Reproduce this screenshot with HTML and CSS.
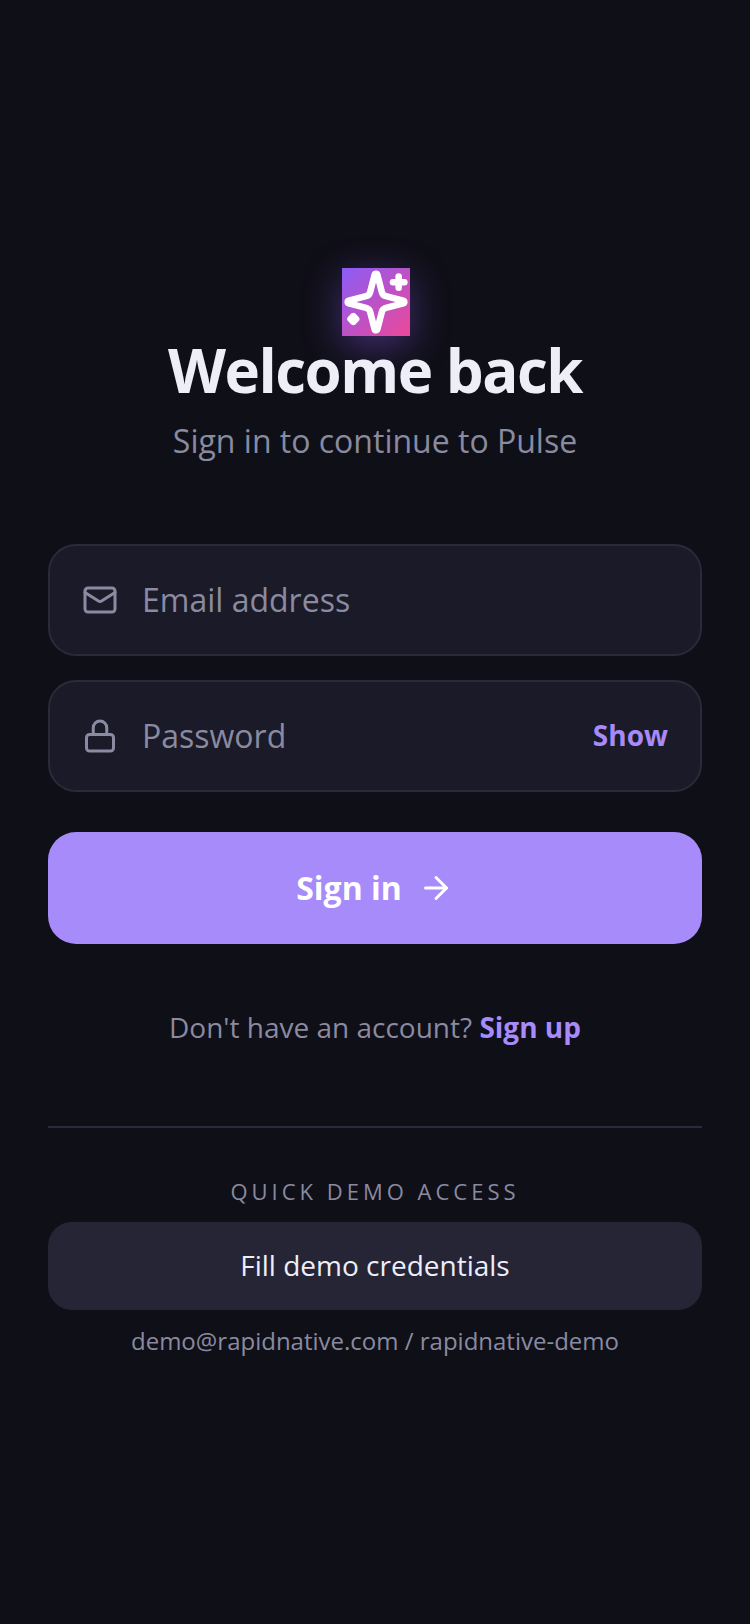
FILE: index.html
```html
<!DOCTYPE html>
<html lang="en">
<head>
  <meta charset="UTF-8">
  <meta name="viewport" content="width=device-width, initial-scale=1.0">
  <title>Pulse - Sign in</title>
  <link rel="stylesheet" href="styles.css">
</head>

<body>
  <main class="screen">
    <div class="header">
      <div class="logo">
        <svg class="logo-icon" viewBox="0 0 24 24">
          <path d="M9.937 15.5A2 2 0 0 0 8.5 14.063l-6.135-1.582a.5.5 0 0 1 0-.962L8.5 9.936A2 2 0 0 0 9.937 8.5l1.582-6.135a.5.5 0 0 1 .963 0L14.063 8.5A2 2 0 0 0 15.5 9.937l6.135 1.581a.5.5 0 0 1 0 .964L15.5 14.063a2 2 0 0 0-1.437 1.437l-1.582 6.135a.5.5 0 0 1-.963 0z"/>
          <path d="M20 3v4"/>
          <path d="M22 5h-4"/>
          <path class="logo-dot" d="M4 17l1 1-1 1-1-1z"/>
        </svg>
      </div>
      <h1 class="title">Welcome back</h1>
      <p class="subtitle">Sign in to continue to Pulse</p>
    </div>

    <form class="form">
      <label class="field">
        <svg class="field-icon" viewBox="0 0 24 24">
          <rect x="2" y="4" width="20" height="16" rx="2"/>
          <path d="m22 7-8.97 5.7a1.94 1.94 0 0 1-2.06 0L2 7"/>
        </svg>
        <input class="field-input" type="email" placeholder="Email address">
      </label>
      <label class="field">
        <svg class="field-icon" viewBox="0 0 24 24">
          <rect x="3" y="11" width="18" height="11" rx="2"/>
          <path d="M7.5 11V6.5a4.5 4.5 0 0 1 9 0V11"/>
        </svg>
        <input class="field-input" type="password" placeholder="Password">
        <span class="show-link">Show</span>
      </label>
      <button class="submit" type="button">
        <span class="submit-text">Sign in</span>
        <svg class="submit-icon" viewBox="0 0 24 24">
          <path d="M5 12h14"/>
          <path d="m12 5 7 7-7 7"/>
        </svg>
      </button>
    </form>

    <p class="signup">Don't have an account? <a class="signup-link" href="#">Sign up</a></p>

    <div class="demo">
      <div class="demo-label">QUICK DEMO ACCESS</div>
      <button class="demo-button" type="button">Fill demo credentials</button>
      <div class="demo-note">demo@rapidnative.com / rapidnative-demo</div>
    </div>
  </main>
</body>
</html>
```

FILE: styles.css
```css
* {
  box-sizing: border-box;
}

body {
  margin: 0;
  background: #0f0f17;
  font-family: "Open Sans", sans-serif;
}

.screen {
  min-height: 1624px;
  padding: 0 48px;
  display: flex;
  flex-direction: column;
  justify-content: center;
}

.header {
  display: flex;
  flex-direction: column;
  align-items: center;
  margin-bottom: 82px;
}

.logo {
  width: 68px;
  height: 68px;
  margin-left: 2px;
  background: linear-gradient(135deg, #8b5cf6, #ec4899);
  box-shadow: 0 10px 38px rgba(139, 92, 246, 0.42);
}

.logo-icon {
  display: block;
  width: 68px;
  height: 68px;
  fill: none;
  stroke: #fff;
  stroke-width: 2.3;
  stroke-linecap: round;
  stroke-linejoin: round;
}

.logo-dot {
  fill: #fff;
}

.title {
  margin: 0;
  color: #eeeef9;
  font-size: 60px;
  line-height: 68px;
  font-weight: 700;
  letter-spacing: -1.5px;
}

.subtitle {
  margin: 16px 0 0;
  color: #8a8aa0;
  font-size: 32px;
  line-height: 42px;
}

.form {
  display: flex;
  flex-direction: column;
  gap: 24px;
}

.field {
  height: 112px;
  padding: 0 32px;
  display: flex;
  align-items: center;
  gap: 24px;
  background: #1a1a28;
  border: 2px solid #2a2a3c;
  border-radius: 28px;
}

.field-icon {
  flex: none;
  width: 36px;
  height: 36px;
  fill: none;
  stroke: #8a8aa0;
  stroke-width: 2;
  stroke-linecap: round;
  stroke-linejoin: round;
}

.field-input {
  flex: 1;
  min-width: 0;
  padding: 0 0 2px;
  border: none;
  outline: none;
  background: none;
  color: #eeeef9;
  font-family: inherit;
  font-size: 32px;
}

.field-input::placeholder {
  color: #8a8aa0;
  opacity: 1;
}

.show-link {
  padding-bottom: 2px;
  color: #a78bfa;
  font-size: 28px;
  font-weight: 700;
}

.submit {
  height: 112px;
  margin-top: 16px;
  display: flex;
  align-items: center;
  justify-content: center;
  gap: 16px;
  background: #a78bfa;
  border: none;
  border-radius: 28px;
  color: #fff;
  font-family: inherit;
  font-size: 32px;
  font-weight: 700;
}

.submit-text {
  padding-bottom: 2px;
}

.submit-icon {
  width: 36px;
  height: 36px;
  fill: none;
  stroke: #fff;
  stroke-width: 2;
  stroke-linecap: round;
  stroke-linejoin: round;
}

.signup {
  margin: 63px 0 0;
  text-align: center;
  color: #8a8aa0;
  font-size: 28px;
  line-height: 40px;
}

.signup-link {
  color: #a78bfa;
  font-weight: 700;
  text-decoration: none;
}

.demo {
  margin-top: 79px;
  padding-top: 48px;
  border-top: 2px solid #2a2a3c;
  display: flex;
  flex-direction: column;
  gap: 16px;
  text-align: center;
}

.demo-label {
  color: #8a8aa0;
  font-size: 22px;
  line-height: 30px;
  letter-spacing: 4px;
}

.demo-button {
  height: 88px;
  padding: 0 0 2px;
  background: #252536;
  border: none;
  border-radius: 24px;
  color: #eeeef9;
  font-family: inherit;
  font-size: 28px;
}

.demo-note {
  color: #8a8aa0;
  font-size: 24px;
  line-height: 30px;
}
```
